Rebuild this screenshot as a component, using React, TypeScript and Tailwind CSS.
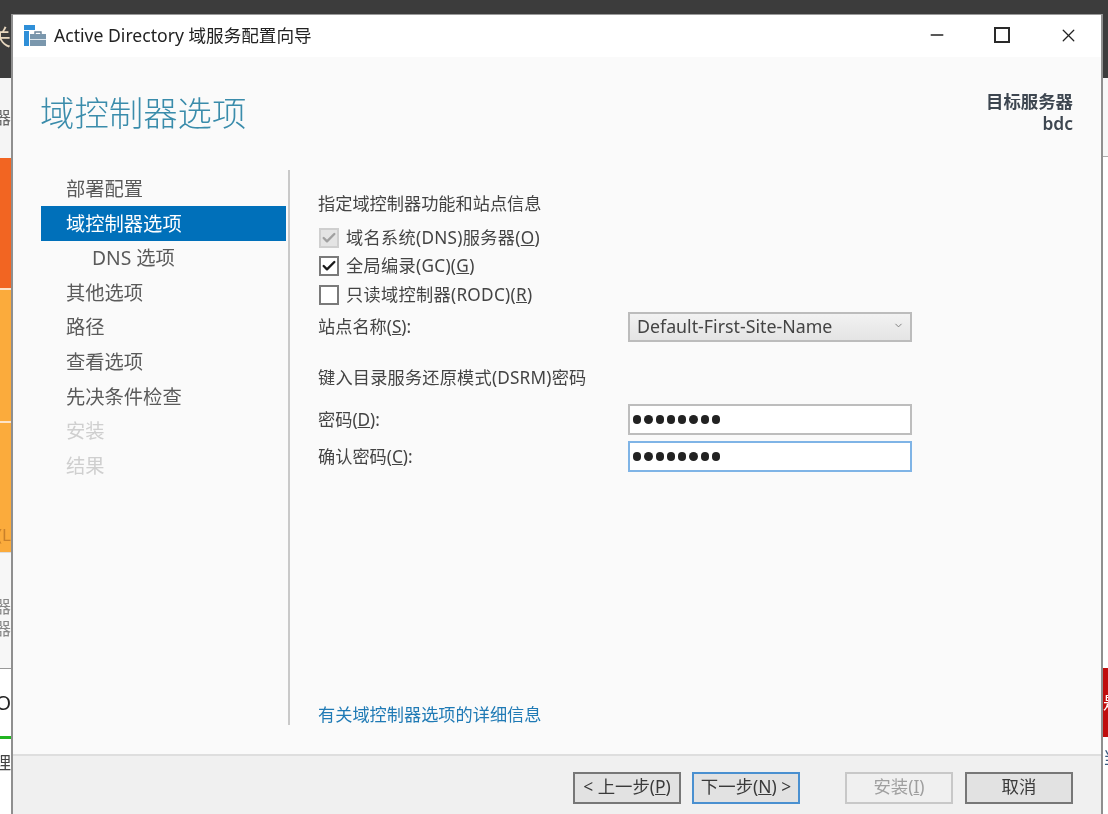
import React from 'react';
import { Check, ChevronDown, Minus, X } from 'lucide-react';

const FONT = "font-['Noto_Sans','Noto_Sans_CJK_SC',sans-serif]";

const navItems = [
  { label: '部署配置', cls: 'text-[#5a5a5a] pl-[25px]' },
  { label: '域控制器选项', cls: 'bg-[#0070ba] text-white pl-[25px]' },
  { label: 'DNS 选项', cls: 'text-[#5a5a5a] pl-[51px]' },
  { label: '其他选项', cls: 'text-[#5a5a5a] pl-[25px]' },
  { label: '路径', cls: 'text-[#5a5a5a] pl-[25px]' },
  { label: '查看选项', cls: 'text-[#5a5a5a] pl-[25px]' },
  { label: '先决条件检查', cls: 'text-[#5a5a5a] pl-[25px]' },
  { label: '安装', cls: 'text-[#cfcfcf] pl-[25px]' },
  { label: '结果', cls: 'text-[#cfcfcf] pl-[25px]' },
];

function WizardIcon() {
  return (
    <svg width="22" height="22" viewBox="0 0 22 22" className="shrink-0">
      <rect x="0" y="0" width="11" height="5" fill="#2f8fd8" />
      <rect x="0" y="6" width="5" height="15" fill="#2f8fd8" />
      <rect x="6" y="9" width="16" height="12" fill="#7a97ad" />
      <rect x="6" y="14" width="16" height="1" fill="#dfe8ee" />
      <path d="M11 9V7h6v2" fill="none" stroke="#6b8499" strokeWidth="1.4" />
    </svg>
  );
}

function CheckRow({ label, hotkey, state }: { label: string; hotkey: string; state: 'disabled' | 'on' | 'off' }) {
  return (
    <div className="h-[28.5px] flex items-center">
      <div
        className={`w-[20px] h-[20px] ml-px mr-[7px] flex items-center justify-center border-2 ${
          state === 'disabled' ? 'bg-[#e4e4e4] border-[#cfcfcf]' : 'bg-white border-[#7a7a7a]'
        }`}
      >
        {state !== 'off' && (
          <Check size={16} strokeWidth={3.5} className={state === 'disabled' ? 'text-[#a0a0a0]' : 'text-[#1a1a1a]'} />
        )}
      </div>
      <span className="text-[17.2px] tracking-[0.3px] text-[#444]">
        {label}(<u>{hotkey}</u>)
      </span>
    </div>
  );
}

function PasswordBox({ focused }: { focused?: boolean }) {
  return (
    <div className={`w-[284px] h-[31px] bg-white border-2 flex items-center gap-[3px] pl-[3px] ${focused ? 'border-[#7fb4e6]' : 'border-[#bdbdbd]'}`}>
      {[0, 1, 2, 3, 4, 5, 6, 7].map(i => (
        <span key={i} className="w-[8.3px] h-[8.3px] rounded-full bg-[#222]" />
      ))}
    </div>
  );
}

function WizardButton({ children, cls }: { children: React.ReactNode; cls: string }) {
  return <div className={`w-[108px] h-[32px] border-2 flex items-center justify-center pb-[3px] text-[17.4px] ${cls}`}>{children}</div>;
}

export default function App() {
  return (
    <div className={`w-[1108px] h-[814px] overflow-hidden flex flex-col bg-white blur-[0.4px] ${FONT}`}>
      <div className="h-[14px] bg-[#3c3c3c] shrink-0" />
      <div className="flex-1 flex min-h-0">
        {/* what is left visible of the window behind, left side */}
        <div className="w-[11px] shrink-0 flex flex-col overflow-hidden text-[17px] whitespace-nowrap">
          <div className="h-[64px] bg-[#3c3c3c] flex justify-end items-start pt-[10px] text-[#e8d8c0] text-[22px] leading-[24px]">关</div>
          <div className="h-[80px] bg-[#f5f5f5] flex justify-end items-center text-[#666]">务器</div>
          <div className="h-[130px] bg-[#f26522]" />
          <div className="h-[2px] bg-[#fde3c8]" />
          <div className="h-[131px] bg-[#fbab3c]" />
          <div className="h-[2px] bg-[#fde3c8]" />
          <div className="h-[129px] bg-[#fbab3c] flex justify-end items-end pb-[5px] text-[#c9802a]">(L</div>
          <div className="h-[116px] bg-[#f7f7f7] border-t border-[#ddd] flex flex-col items-end justify-center pt-[14px] text-[#888] leading-[22px]">
            <span>器</span>
            <span>器</span>
          </div>
          <div className="h-[68px] bg-white border-t border-[#999] flex justify-end items-center text-[#222] text-[20px]">O</div>
          <div className="h-[3px] bg-[#22b522]" />
          <div className="flex-1 bg-white flex justify-end pt-[11px] text-[#444]">理</div>
        </div>

        {/* dialog */}
        <div className="w-[1092px] shrink-0 flex flex-col bg-[#fafafa] border-x-2 border-t border-x-[#8f8f8f] border-t-[#9a9a9a]">
          <div className="h-[42px] bg-white flex items-center shrink-0 pl-[11px]">
            <WizardIcon />
            <span className="ml-[8px] pb-[2px] text-[17.6px] text-[#222]">Active Directory 域服务配置向导</span>
            <div className="ml-auto pb-[2px] flex items-center text-[#222]">
              <Minus size={20} strokeWidth={1.6} className="mr-[47px]" />
              <div className="w-[16px] h-[16px] border-2 border-[#2a2a2a] mr-[48px]" />
              <X size={21} strokeWidth={1.5} className="mr-[22px]" />
            </div>
          </div>

          <div className="h-[113px] shrink-0 flex justify-between pl-[27px] pr-[28px]">
            <h1 className="mt-[31px] text-[34.4px] leading-[50px] font-light text-[#3a8cab]">域控制器选项</h1>
            <div className="mt-[33px] text-right text-[17.4px] leading-[22px] font-semibold text-[#3d4650]">
              <div>目标服务器</div>
              <div>bdc</div>
            </div>
          </div>

          <div className="h-[555px] shrink-0 flex pl-[28px]">
            <nav className="w-[245px] pt-[1.4px] text-[19.3px]">
              {navItems.map(item => (
                <div key={item.label} className={`h-[34.6px] pt-[1.5px] flex items-center ${item.cls}`}>
                  {item.label}
                </div>
              ))}
            </nav>
            <div className="w-[2px] ml-[2px] bg-[#c9c9c9]" />
            <div className="flex-1 flex flex-col pl-[28px] pt-[21px] text-[17.2px] text-[#444]">
              <div className="h-[26px] flex items-center">指定域控制器功能和站点信息</div>
              <div className="mt-[6.5px]">
                <CheckRow label="域名系统(DNS)服务器" hotkey="O" state="disabled" />
                <CheckRow label="全局编录(GC)" hotkey="G" state="on" />
                <CheckRow label="只读域控制器(RODC)" hotkey="R" state="off" />
              </div>
              <div className="mt-[3px] flex items-center">
                <span className="w-[310px]">站点名称(<u>S</u>):</span>
                <div className="w-[284px] h-[30px] pb-[1px] border-2 border-[#bcbcbc] bg-gradient-to-b from-[#f2f2f2] to-[#e4e4e4] flex items-center justify-between pl-[7px] pr-[6px] text-[17.8px] text-[#444]">
                  <span>Default-First-Site-Name</span>
                  <ChevronDown size={11} strokeWidth={2} className="text-[#777] mb-[3px]" />
                </div>
              </div>
              <div className="mt-[23px] h-[26px] flex items-center tracking-[0.2px]">键入目录服务还原模式(DSRM)密码</div>
              <div className="mt-[13px] flex items-center">
                <span className="w-[310px]">密码(<u>D</u>):</span>
                <PasswordBox />
              </div>
              <div className="mt-[6px] flex items-center">
                <span className="w-[310px]">确认密码(<u>C</u>):</span>
                <PasswordBox focused />
              </div>
              <div className="mt-auto h-[20px] flex items-center text-[#1f7ab5]">有关域控制器选项的详细信息</div>
            </div>
          </div>

          <div className="flex-1 mt-[29px] bg-[#f0f0f0] border-t-2 border-[#dedede] flex items-start pt-[15.5px] pr-[28px] justify-end text-[#3a3a3a]">
            <WizardButton cls="bg-[#e2e2e2] border-[#777]">
              <span>&lt; 上一步(<u>P</u>)</span>
            </WizardButton>
            <WizardButton cls="ml-[11px] bg-[#e2e2e2] border-[#4a90d0]">
              <span>下一步(<u>N</u>) &gt;</span>
            </WizardButton>
            <WizardButton cls="ml-[45px] bg-[#f0f0f0] border-[#c8c8c8] text-[#9f9f9f]">
              <span>安装(<u>I</u>)</span>
            </WizardButton>
            <WizardButton cls="ml-[12px] bg-[#e2e2e2] border-[#777]">
              <span>取消</span>
            </WizardButton>
          </div>
        </div>

        {/* window behind, right side */}
        <div className="flex-1 flex flex-col overflow-hidden text-[17px] whitespace-nowrap">
          <div className="h-[64px] bg-[#3c3c3c]" />
          <div className="h-[79px] bg-[#f7f7f7] border-b border-[#aaa]" />
          <div className="h-[511px] bg-white" />
          <div className="h-[69px] bg-[#c00d0d] flex items-center text-white">是</div>
          <div className="flex-1 bg-white pt-[8px] text-[#3a5a80]">当</div>
        </div>
      </div>
    </div>
  );
}
